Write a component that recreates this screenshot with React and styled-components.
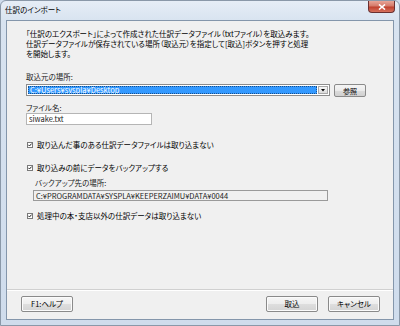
import React from "react";
import styled, { createGlobalStyle } from "styled-components";

const GlobalStyle = createGlobalStyle`
  html, body { margin: 0; padding: 0; }
  body {
    width: 400px; height: 326px; overflow: hidden;
    font-family: "Noto Sans CJK JP", "Noto Sans", sans-serif;
    background: #cfdcec;
  }
  * { box-sizing: border-box; }
`;

const Window = styled.div`
  width: 400px;
  height: 326px;
  display: flex;
  flex-direction: column;
  background: linear-gradient(180deg, #e6edf6 0px, #d8e3f0 20px, #cfdcec 100%);
  border: 1px solid #8a98a8;
  border-radius: 6px 6px 0 0;
`;

const TitleBar = styled.div`
  height: 19px;
  display: flex;
  align-items: flex-start;
  padding-left: 4px;
`;

const Title = styled.div`
  flex: 1;
  font-size: 7.5px;
  line-height: 8px;
  margin-top: 5px;
  color: #000;
  font-feature-settings: "palt";
`;

const CloseButton = styled.div`
  width: 27px;
  height: 12px;
  margin-right: 4px;
  border: 1px solid #6a3030;
  border-top: none;
  border-radius: 0 0 4px 4px;
  background: linear-gradient(180deg, #e8a597 0%, #d47a6a 45%, #c0412e 55%, #d6725e 100%);
  display: flex;
  align-items: center;
  justify-content: center;
`;

const Frame = styled.div`
  flex: 1;
  display: flex;
  padding: 0 5px 5px 5px;
`;

const Client = styled.div`
  flex: 1;
  display: flex;
  flex-direction: column;
  background: #f0f0f0;
  border: 1px solid #8496ab;
  color: #000;
  font-size: 7.5px;
  line-height: 10px;
  font-feature-settings: "palt";
`;

const Content = styled.div`
  flex: 1;
  display: flex;
  flex-direction: column;
  align-items: flex-start;
  padding: 8px 0 0 19px;
`;

const Para = styled.p`
  margin: 0;
  line-height: 10px;
`;

const Label = styled.div`
  margin-top: ${(p) => p.$mt || 0}px;
  margin-left: ${(p) => p.$ml || 0}px;
  height: 10px;
  color: #1a1a1a;
`;

const ComboRow = styled.div`
  margin-top: 2px;
  display: flex;
  align-items: flex-start;
  gap: 4px;
`;

const Combo = styled.div`
  width: 304px;
  height: 12px;
  border: 1px solid #8c8c8c;
  background: #fff;
  display: flex;
  padding: 1px;
`;

const ComboValue = styled.div`
  flex: 1;
  background: #3399ff;
  color: #fff;
  outline: 1px dotted #1a4f8a;
  outline-offset: -1px;
  padding-left: 2px;
  font-size: 7.5px;
  line-height: 8px;
`;

const DropButton = styled.div`
  width: 10px;
  margin-left: 1px;
  background: linear-gradient(180deg, #f6f6f6, #dcdcdc);
  border: 1px solid #a8a8a8;
  display: flex;
  align-items: center;
  justify-content: center;
`;

const SmallButton = styled.div`
  width: 32px;
  height: 13px;
  border: 1px solid #8a8a8a;
  border-radius: 2px;
  background: linear-gradient(180deg, #f4f4f4 0%, #ebebeb 50%, #dcdcdc 51%, #d0d0d0 100%);
  display: flex;
  align-items: center;
  justify-content: center;
  font-size: 7px;
  line-height: 8px;
`;

const TextField = styled.div`
  margin-top: ${(p) => p.$mt || 0}px;
  margin-left: ${(p) => p.$ml || 0}px;
  width: ${(p) => p.$w}px;
  height: ${(p) => p.$h}px;
  border: 1px solid ${(p) => (p.$readonly ? "#9a9a9a" : "#b5b5b5")};
  background: ${(p) => (p.$readonly ? "#f0f0f0" : "#fff")};
  padding-left: 2px;
  display: flex;
  align-items: center;
  font-size: 7.5px;
  color: #222;
  white-space: nowrap;
  overflow: hidden;
`;

const CheckRow = styled.div`
  margin-top: ${(p) => p.$mt}px;
  margin-left: 1px;
  height: 10px;
  display: flex;
  align-items: center;
  gap: 4px;
`;

const Separator = styled.div`
  height: 2px;
  border-top: 1px solid #d0d0d0;
  border-bottom: 1px solid #ffffff;
`;

const ButtonRow = styled.div`
  display: flex;
  align-items: center;
  padding: 5px 13px 7px 14px;
`;

const DialogButton = styled.button`
  width: ${(p) => p.$w || 52}px;
  height: 16px;
  margin-left: ${(p) => p.$ml || 0}px;
  padding: 0;
  border: 1px solid #8a8a8a;
  border-radius: 2px;
  background: linear-gradient(180deg, #f6f6f6 0%, #ededed 50%, #dedede 51%, #d4d4d4 100%);
  font-family: inherit;
  font-size: 7.5px;
  line-height: 10px;
  color: #000;
  font-feature-settings: "palt";
  box-shadow: inset 0 0 0 1px #fbfbfb;
`;

const Spacer = styled.div`
  flex: 1;
`;

const CheckBox = () => (
  <svg width="6" height="6" viewBox="0 0 6 6">
    <rect x="0.5" y="0.5" width="5" height="5" fill="#fff" stroke="#7a7a7a" />
    <path d="M1.4 2.8 L2.5 4 L4.6 1.6" fill="none" stroke="#222" strokeWidth="1" />
  </svg>
);

export default function App() {
  return (
    <>
      <GlobalStyle />
      <Window>
        <TitleBar>
          <Title>仕訳のインポート</Title>
          <CloseButton>
            <svg width="8" height="6" viewBox="0 0 8 6">
              <path d="M1 0.5 L7 5.5 M7 0.5 L1 5.5" stroke="#fff" strokeWidth="1.6" />
            </svg>
          </CloseButton>
        </TitleBar>
        <Frame>
          <Client>
            <Content>
              <Para>
                「仕訳のエクスポート」によって作成された仕訳データファイル（txtファイル）を取込みます。
                <br />
                仕訳データファイルが保存されている場所（取込元）を指定して[取込]ボタンを押すと処理
                <br />
                を開始します。
              </Para>
              <Label $mt={13}>取込元の場所:</Label>
              <ComboRow>
                <Combo>
                  <ComboValue>C:¥Users¥syspla¥Desktop</ComboValue>
                  <DropButton>
                    <svg width="4" height="3" viewBox="0 0 4 3">
                      <path d="M0 0 L4 0 L2 2.5 Z" fill="#000" />
                    </svg>
                  </DropButton>
                </Combo>
                <SmallButton>参照</SmallButton>
              </ComboRow>
              <Label $mt={6}>ファイル名:</Label>
              <TextField $w={126} $h={12}>siwake.txt</TextField>
              <CheckRow $mt={15}>
                <CheckBox />
                <span>取り込んだ事のある仕訳データファイルは取り込まない</span>
              </CheckRow>
              <CheckRow $mt={13}>
                <CheckBox />
                <span>取り込みの前にデータをバックアップする</span>
              </CheckRow>
              <Label $mt={5} $ml={9}>バックアップ先の場所:</Label>
              <TextField $mt={2} $ml={7} $w={295} $h={11} $readonly>
                C:¥PROGRAMDATA¥SYSPLA¥KEEPERZAIMU¥DATA¥0044
              </TextField>
              <CheckRow $mt={10}>
                <CheckBox />
                <span>処理中の本・支店以外の仕訳データは取り込まない</span>
              </CheckRow>
            </Content>
            <Separator />
            <ButtonRow>
              <DialogButton>F1:ヘルプ</DialogButton>
              <Spacer />
              <DialogButton>取込</DialogButton>
              <DialogButton $ml={10}>キャンセル</DialogButton>
            </ButtonRow>
          </Client>
        </Frame>
      </Window>
    </>
  );
}
